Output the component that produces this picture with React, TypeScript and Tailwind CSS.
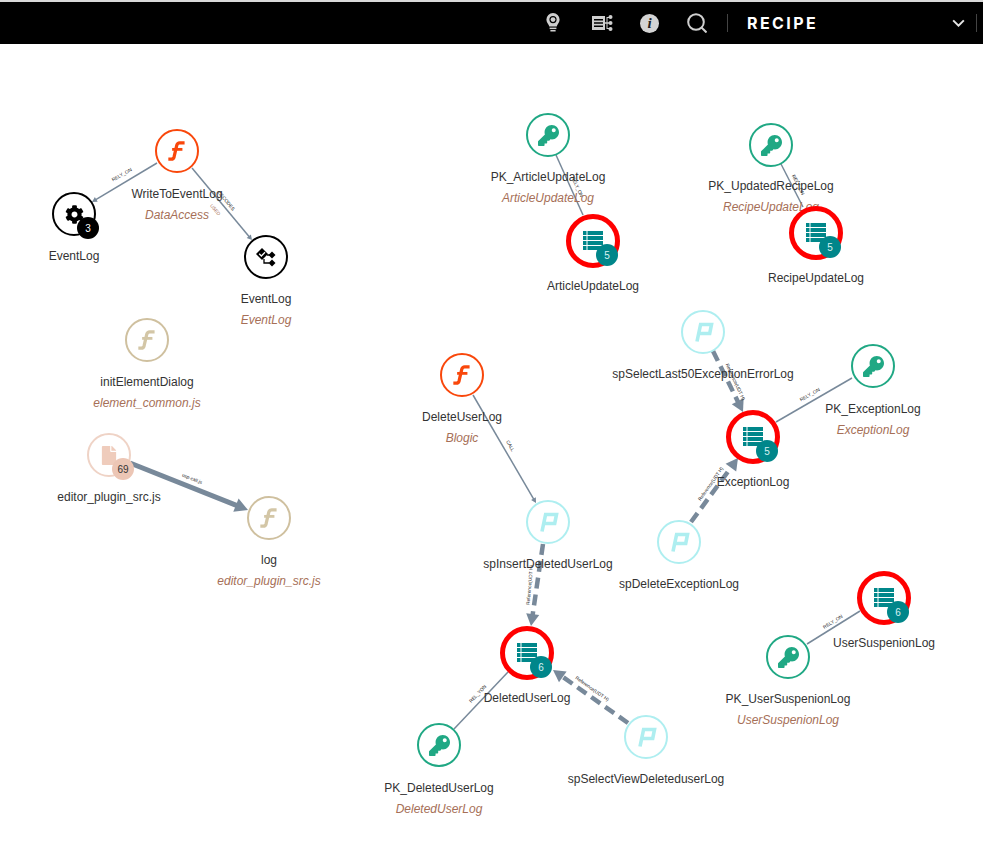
import React from 'react'
import { FaCog, FaFile, FaKey } from 'react-icons/fa'

type Kind = 'func' | 'tanfunc' | 'key' | 'table' | 'proc' | 'gear' | 'flow' | 'file'

type NodeItem = {
    x: number
    y: number
    kind: Kind
    name: string
    nameY: number
    sub?: string
    subY?: number
    badge?: string
}

const nodes: NodeItem[] = [
    { x: 177, y: 151, kind: 'func', name: 'WriteToEventLog', nameY: 194, sub: 'DataAccess', subY: 215 },
    { x: 74, y: 214, kind: 'gear', name: 'EventLog', nameY: 256, badge: '3' },
    { x: 266, y: 257, kind: 'flow', name: 'EventLog', nameY: 299, sub: 'EventLog', subY: 320 },
    { x: 147, y: 340, kind: 'tanfunc', name: 'initElementDialog', nameY: 382, sub: 'element_common.js', subY: 403 },
    { x: 109, y: 455, kind: 'file', name: 'editor_plugin_src.js', nameY: 497, badge: '69' },
    { x: 269, y: 518, kind: 'tanfunc', name: 'log', nameY: 560, sub: 'editor_plugin_src.js', subY: 581 },
    { x: 548, y: 135, kind: 'key', name: 'PK_ArticleUpdateLog', nameY: 177, sub: 'ArticleUpdateLog', subY: 198 },
    { x: 593, y: 241, kind: 'table', name: 'ArticleUpdateLog', nameY: 286, badge: '5' },
    { x: 771, y: 145, kind: 'key', name: 'PK_UpdatedRecipeLog', nameY: 186, sub: 'RecipeUpdateLog', subY: 207 },
    { x: 816, y: 233, kind: 'table', name: 'RecipeUpdateLog', nameY: 278, badge: '5' },
    { x: 703, y: 332, kind: 'proc', name: 'spSelectLast50ExceptionErrorLog', nameY: 374 },
    { x: 873, y: 366, kind: 'key', name: 'PK_ExceptionLog', nameY: 409, sub: 'ExceptionLog', subY: 430 },
    { x: 753, y: 437, kind: 'table', name: 'ExceptionLog', nameY: 482, badge: '5' },
    { x: 679, y: 542, kind: 'proc', name: 'spDeleteExceptionLog', nameY: 584 },
    { x: 462, y: 375, kind: 'func', name: 'DeleteUserLog', nameY: 417, sub: 'Blogic', subY: 438 },
    { x: 548, y: 522, kind: 'proc', name: 'spInsertDeletedUserLog', nameY: 564 },
    { x: 527, y: 653, kind: 'table', name: 'DeletedUserLog', nameY: 698, badge: '6' },
    { x: 439, y: 745, kind: 'key', name: 'PK_DeletedUserLog', nameY: 788, sub: 'DeletedUserLog', subY: 809 },
    { x: 646, y: 737, kind: 'proc', name: 'spSelectViewDeleteduserLog', nameY: 779 },
    { x: 884, y: 598, kind: 'table', name: 'UserSuspenionLog', nameY: 643, badge: '6' },
    { x: 788, y: 657, kind: 'key', name: 'PK_UserSuspenionLog', nameY: 699, sub: 'UserSuspenionLog', subY: 720 },
]

type Edge = {
    from: [number, number]
    to: [number, number]
    width: number
    dashed?: boolean
    head?: number
    label: string
    at: [number, number]
    angle: number
}

const edges: Edge[] = [
    { from: [157, 163], to: [92, 202], width: 1.5, head: 5, label: 'RELY_ON', at: [122, 175], angle: -30 },
    { from: [192, 168], to: [252, 240], width: 1.5, head: 5, label: 'DECODES', at: [226, 201], angle: 50 },
    { from: [130, 463], to: [248, 510], width: 5, head: 13, label: 'usp-call.js', at: [192, 479], angle: 22 },
    { from: [556, 155], to: [583, 215], width: 1.5, label: 'RELY_ON', at: [577, 187], angle: 65 },
    { from: [781, 164], to: [803, 207], width: 1.5, label: 'RELY_ON', at: [798, 185], angle: 63 },
    { from: [713, 351], to: [743, 412], width: 4.5, dashed: true, head: 12, label: 'Reference(UDT H)', at: [735, 382], angle: 65 },
    { from: [852, 378], to: [776, 422], width: 1.5, label: 'RELY_ON', at: [810, 395], angle: -30 },
    { from: [691, 522], to: [738, 458], width: 4.5, dashed: true, head: 12, label: 'Reference(UDT H)', at: [711, 484], angle: -55 },
    { from: [473, 395], to: [536, 503], width: 1.5, head: 5, label: 'CALL', at: [510, 446], angle: 60 },
    { from: [543, 544], to: [531, 626], width: 4.5, dashed: true, head: 12, label: 'Reference(UDT H)', at: [530, 585], angle: -85 },
    { from: [628, 723], to: [553, 670], width: 4.5, dashed: true, head: 12, label: 'Reference(UDT H)', at: [592, 689], angle: 35 },
    { from: [454, 729], to: [508, 672], width: 1.5, label: 'REL_YON', at: [478, 694], angle: -47 },
    { from: [807, 644], to: [860, 611], width: 1.5, label: 'RELY_ON', at: [833, 622], angle: -32 },
]

function FuncIcon({ className }: { className: string }) {
    return (
        <svg viewBox="0 0 24 24" className={className} fill="none" stroke="currentColor">
            <path d="M19 4.5h-4.5c-1.6 0-2.3.8-2.7 2.2L9.3 17.5c-.4 1.5-1.1 2-2.6 2H4" strokeWidth="3" />
            <path d="M7.5 10.5h9.5" strokeWidth="2.6" />
        </svg>
    )
}

function ProcIcon() {
    return (
        <svg viewBox="0 0 24 24" className="h-6 w-6 text-[#aeeef0]" fill="none" stroke="currentColor" strokeWidth="3.6">
            <path d="M6 21.5 L9.6 4.5 H20.5 L18.7 13.5 H8.5" />
        </svg>
    )
}

function TableIcon() {
    return (
        <svg viewBox="0 0 20 20" className="h-5 w-5 text-[#00878a]" fill="currentColor">
            {[0, 5, 10, 15].map((y) => (
                <g key={y}>
                    <rect x="0" y={y} width="3.5" height="4" />
                    <rect x="4.5" y={y} width="15.5" height="4" />
                </g>
            ))}
        </svg>
    )
}

function FlowIcon() {
    return (
        <svg viewBox="0 0 20 20" className="h-5 w-5 text-black" fill="currentColor">
            <path d="M6 1 L12 7 L6 13 L0 7 Z" />
            <path d="M3.2 6.8 L5.4 9 L9 5.2" fill="none" stroke="#fff" strokeWidth="1.3" />
            <path d="M16 4.5 L19.5 8 L16 11.5 L12.5 8 Z" />
            <path d="M16 12.5 L19.5 16 L16 19.5 L12.5 16 Z" />
            <path d="M11 8 H16 M8 12 V16 H13" fill="none" stroke="currentColor" strokeWidth="1.3" />
        </svg>
    )
}

function NodeIcon({ kind }: { kind: Kind }) {
    if (kind === 'func') return <FuncIcon className="h-[26px] w-[26px] text-[#f9470b]" />
    if (kind === 'tanfunc') return <FuncIcon className="h-[26px] w-[26px] text-[#d3c6a6]" />
    if (kind === 'key') return <FaKey className="h-[21px] w-[21px] text-[#20a884]" />
    if (kind === 'table') return <TableIcon />
    if (kind === 'proc') return <ProcIcon />
    if (kind === 'gear') return <FaCog className="h-[19px] w-[19px] text-black" />
    if (kind === 'flow') return <FlowIcon />
    return <FaFile className="h-[19px] w-[16px] text-[#efccbc]" />
}

const ringClass: Record<Kind, string> = {
    func: 'h-11 w-11 border-[2.5px] border-[#f9470b]',
    tanfunc: 'h-11 w-11 border-[2.5px] border-[#cfc09f]',
    key: 'h-11 w-11 border-[2.5px] border-[#20a884]',
    table: 'h-[54px] w-[54px] border-[5px] border-[#f00]',
    proc: 'h-11 w-11 border-[2.5px] border-[#aeeef0]',
    gear: 'h-11 w-11 border-[2.5px] border-black',
    flow: 'h-11 w-11 border-[2.5px] border-black',
    file: 'h-11 w-11 border-[2.5px] border-[#efd3c6]',
}

const badgeClass: Record<string, string> = {
    gear: 'bg-black text-white',
    table: 'bg-[#00868a] text-[#d8f2f2]',
    file: 'bg-[#ecc6b5] text-[#333]',
}

function EdgeLine({ edge }: { edge: Edge }) {
    const [x1, y1] = edge.from
    const [x2, y2] = edge.to
    const len = Math.hypot(x2 - x1, y2 - y1)
    const ux = (x2 - x1) / len
    const uy = (y2 - y1) / len
    const head = edge.head ?? 0
    const endX = x2 - ux * head * 0.8
    const endY = y2 - uy * head * 0.8
    const side = head * 0.55
    const points = `${x2},${y2} ${x2 - ux * head - uy * side},${y2 - uy * head + ux * side} ${x2 - ux * head + uy * side},${y2 - uy * head - ux * side}`
    return (
        <g>
            <line x1={x1} y1={y1} x2={endX} y2={endY} stroke="#78899a" strokeWidth={edge.width} strokeDasharray={edge.dashed ? '11 6' : undefined} />
            {head > 0 && <polygon points={points} fill="#78899a" />}
            <text x={edge.at[0]} y={edge.at[1]} transform={`rotate(${edge.angle} ${edge.at[0]} ${edge.at[1]})`} textAnchor="middle" dominantBaseline="middle" fontSize="4.8" fill="#222" fontFamily="'Liberation Sans', sans-serif">
                {edge.label}
            </text>
        </g>
    )
}

function Header() {
    return (
        <header className="flex h-11 shrink-0 items-center border-t-2 border-[#d9d9d9] bg-black pl-[546px] text-[#cfcfcf]">
            <svg viewBox="0 0 14 20" className="h-[20px] w-[14px]" fill="currentColor">
                <path fillRule="evenodd" d="M7 0a6.6 6.6 0 0 1 6.6 6.6c0 2.6-1.6 4-2.4 5.6-.3.6-.4 1-.4 1.4H3.2c0-.4-.1-.8-.4-1.4C2 10.6.4 9.2.4 6.6A6.6 6.6 0 0 1 7 0Zm0 3a3.6 3.6 0 1 0 0 7.2A3.6 3.6 0 0 0 7 3Z" />
                <path d="M7 4.2a2.4 2.4 0 1 1 0 4.800 2.4 2.4 0 0 1 0-4.800Z" />
                <rect x="3.6" y="14.6" width="6.8" height="1.5" />
                <rect x="4.4" y="17" width="5.2" height="1.5" />
            </svg>
            <svg viewBox="0 0 21 16" className="ml-[32px] h-4 w-[21px]" fill="currentColor">
                <path fillRule="evenodd" d="M0 1h13v14H0Zm2 3v1.5h9V4Zm0 3.2v1.5h9V7.2Zm0 3.3V12h9v-1.5Z" />
                <circle cx="18.5" cy="2" r="2" />
                <circle cx="18.5" cy="8" r="2" />
                <circle cx="18.5" cy="14" r="2" />
                <path d="M13 7.3h4v1.4h-4ZM14.5 2h3v1h-2v10h2v1h-3Z" />
            </svg>
            <span className="ml-[27px] flex h-[19px] w-[19px] items-center justify-center rounded-full bg-[#d4d4d4] font-['Liberation_Serif',serif] text-[15px] font-bold italic leading-none text-[#222]">
                i
            </span>
            <svg viewBox="0 0 20 20" className="ml-[28px] h-5 w-5" fill="none" stroke="currentColor" strokeWidth="2">
                <circle cx="9" cy="9" r="7.8" />
                <path d="M14.5 14.5 L19.5 19.5" />
            </svg>
            <span className="ml-[20px] h-[18px] w-px bg-[#444]" />
            <span className="ml-[19px] font-['Inter',sans-serif] text-[16px] font-bold tracking-[0.15em] text-white">RECIPE</span>
            <svg viewBox="0 0 14 9" className="ml-[134px] h-[8px] w-[13px]" fill="none" stroke="#e5e5e5" strokeWidth="2.2">
                <path d="M1 1.5 L7 7.5 L13 1.5" />
            </svg>
            <span className="ml-[11px] h-[18px] w-px bg-[#444]" />
        </header>
    )
}

function App() {
    return (
        <div className="flex h-[849px] w-[983px] flex-col overflow-hidden bg-white font-['Liberation_Sans',Arial,sans-serif]">
            <Header />
            <main className="relative flex-1">
                <svg viewBox="0 44 983 805" className="absolute inset-0 h-full w-full">
                    {edges.map((e) => (
                        <EdgeLine key={`${e.from[0]}-${e.from[1]}`} edge={e} />
                    ))}
                    <text x={215} y={210} transform="rotate(50 215 210)" textAnchor="middle" dominantBaseline="middle" fontSize="4.8" fill="#a66f57" fontFamily="'Liberation Sans', sans-serif">
                        USED
                    </text>
                </svg>
                {nodes.map((n) => (
                    <React.Fragment key={n.name + n.x}>
                        <span className="absolute -translate-x-1/2 -translate-y-1/2 whitespace-nowrap text-xs text-[#333]" style={{ left: n.x, top: n.nameY - 44 }}>
                            {n.name}
                        </span>
                        {n.sub && (
                            <span className="absolute -translate-x-1/2 -translate-y-1/2 whitespace-nowrap text-xs italic text-[#a66f57]" style={{ left: n.x, top: (n.subY ?? 0) - 44 }}>
                                {n.sub}
                            </span>
                        )}
                    </React.Fragment>
                ))}
                {nodes.map((n) => (
                    <div key={n.kind + n.x} className={`absolute flex -translate-x-1/2 -translate-y-1/2 items-center justify-center rounded-full bg-white ${ringClass[n.kind]}`} style={{ left: n.x, top: n.y - 44 }}>
                        <NodeIcon kind={n.kind} />
                    </div>
                ))}
                {nodes.filter((n) => n.badge).map((n) => (
                    <span key={n.kind + n.x} className={`absolute flex h-[22px] w-[22px] -translate-x-1/2 -translate-y-1/2 items-center justify-center rounded-full text-[10px] ${badgeClass[n.kind]}`} style={{ left: n.x + 14, top: n.y + 14 - 44 }}>
                        {n.badge}
                    </span>
                ))}
            </main>
        </div>
    )
}

export default App
